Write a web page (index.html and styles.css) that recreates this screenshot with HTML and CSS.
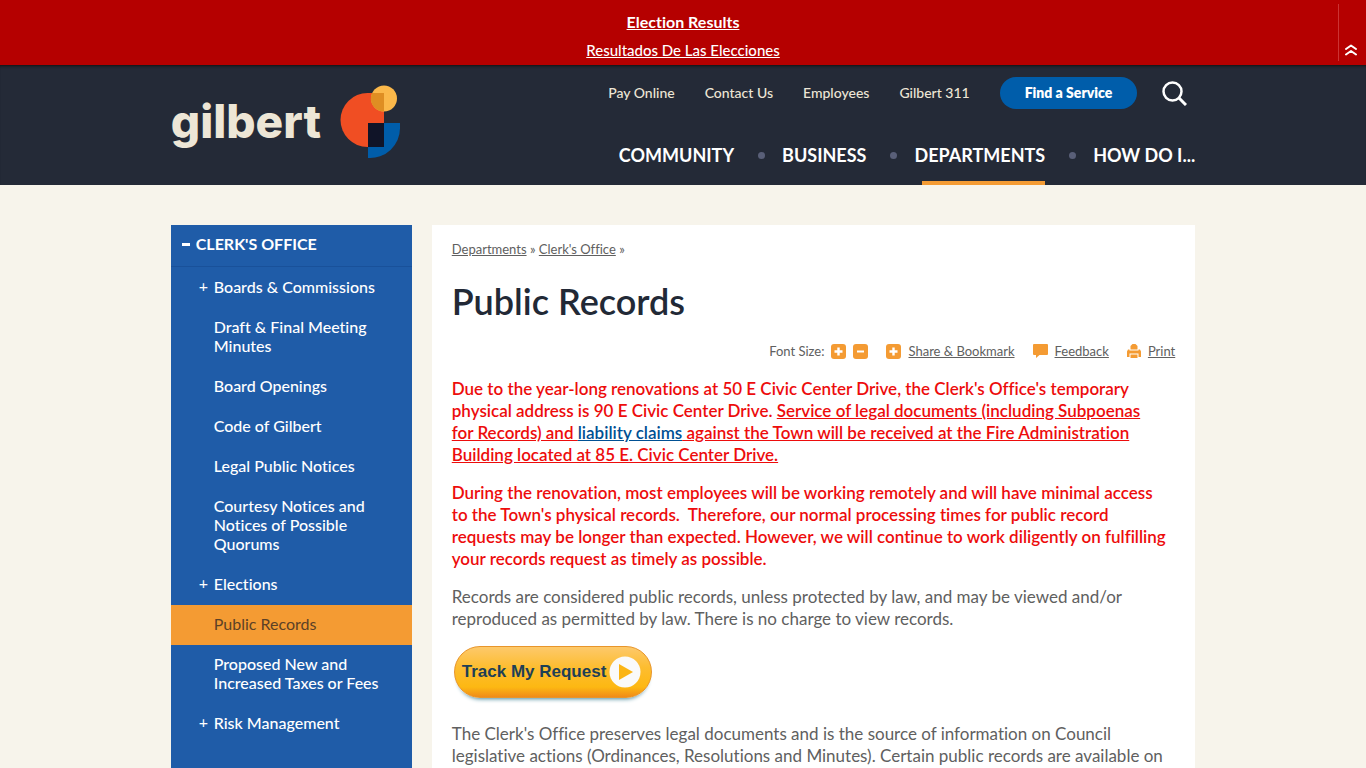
FILE: index.html
```html
<!DOCTYPE html>
<html lang="en">
<head>
<meta charset="utf-8">
<meta name="viewport" content="width=device-width, initial-scale=1">
<title>Public Records | Gilbert, Arizona</title>
<link rel="stylesheet" href="styles.css">
</head>
<body>
<section class="alert" aria-label="Announcements">
  <div class="alert-links">
    <a class="alert-primary" href="#">Election Results</a>
    <a href="#">Resultados De Las Elecciones</a>
  </div>
  <div class="alert-side">
    <button class="alert-toggle" type="button" aria-label="Collapse announcements">
      <svg width="12" height="12" viewBox="0 0 12 12" fill="none" stroke="#fff" stroke-width="2" stroke-linecap="round" stroke-linejoin="round"><path d="M1 5 6 1.500l5 3.500M1 10.500 6 7l5 3.500"/></svg>
    </button>
  </div>
</section>

<header class="site-header">
  <div class="container header-inner">
    <a class="logo" href="#" aria-label="Gilbert home">
      <span class="logo-text">gilbert</span>
      <svg class="logo-mark" width="60" height="74" viewBox="0 0 60 74">
        <path d="M44 8v54H27.500a27 27 0 0 1 0-54z" fill="#f04e23"/>
        <circle cx="44" cy="13.500" r="13" fill="#fbb84a"/>
        <path d="M44 8v18.500A13 13 0 0 1 32 8z" fill="#df8e23"/>
        <path d="M28 38h32v5a30 30 0 0 1-32 30z" fill="#005daa"/>
        <path d="M28 38h16v24H28z" fill="#101428"/>
      </svg>
    </a>
    <div class="header-nav">
      <nav class="top-nav" aria-label="Quick links">
        <a href="#">Pay Online</a>
        <a href="#">Contact Us</a>
        <a href="#">Employees</a>
        <a href="#">Gilbert 311</a>
        <a class="service" href="#">Find a Service</a>
        <button class="search" type="button" aria-label="Search">
          <svg width="25" height="25" viewBox="0 0 25 25" fill="none" stroke="#fff" stroke-width="2.500"><circle cx="10.500" cy="10.500" r="9"/><path d="m17 17 7 7" stroke-width="3"/></svg>
        </button>
      </nav>
      <nav class="main-nav" aria-label="Main">
        <a href="#">Community</a>
        <a href="#">Business</a>
        <a class="current" href="#">Departments</a>
        <a href="#">How Do I...</a>
      </nav>
    </div>
  </div>
</header>

<div class="container page">
  <nav class="sidebar" aria-label="Clerk's Office">
    <a class="side-title" href="#"><span class="minus"></span>Clerk's Office</a>
    <ul>
      <li><a class="more" href="#">Boards &amp; Commissions</a></li>
      <li><a href="#">Draft &amp; Final Meeting Minutes</a></li>
      <li><a href="#">Board Openings</a></li>
      <li><a href="#">Code of Gilbert</a></li>
      <li><a href="#">Legal Public Notices</a></li>
      <li><a href="#">Courtesy Notices and Notices of Possible Quorums</a></li>
      <li><a class="more" href="#">Elections</a></li>
      <li><a class="active" href="#">Public Records</a></li>
      <li><a href="#">Proposed New and Increased Taxes or Fees</a></li>
      <li><a class="more" href="#">Risk Management</a></li>
    </ul>
  </nav>

  <main class="content">
    <div class="crumbs"><a href="#">Departments</a> » <a href="#">Clerk's Office</a> »</div>
    <h1>Public Records</h1>
    <div class="tools">
      <div class="font-size">
        <span>Font Size:</span>
        <button type="button" aria-label="Increase font size"><svg width="15" height="15" viewBox="0 0 15 15"><rect width="15" height="15" rx="3" fill="#f49b33"/><path d="M3.500 7.500h8M7.500 3.500v8" stroke="#fff" stroke-width="2.400"/></svg></button>
        <button type="button" aria-label="Decrease font size"><svg width="15" height="15" viewBox="0 0 15 15"><rect width="15" height="15" rx="3" fill="#f49b33"/><path d="M4 7.500h7" stroke="#fff" stroke-width="2"/></svg></button>
      </div>
      <a href="#"><svg width="15" height="15" viewBox="0 0 15 15"><rect width="15" height="15" rx="3" fill="#f49b33"/><path d="M3.500 7.500h8M7.500 3.500v8" stroke="#fff" stroke-width="2.400"/></svg><span>Share &amp; Bookmark</span></a>
      <a href="#"><svg width="15" height="15" viewBox="0 0 15 15"><path d="M1 0h13a1 1 0 0 1 1 1v9a1 1 0 0 1-1 1H6.500L3 14V11H1a1 1 0 0 1-1-1V1a1 1 0 0 1 1-1z" fill="#f49b33"/></svg><span>Feedback</span></a>
      <a href="#"><svg width="14" height="14" viewBox="0 0 14 14" fill="#f49b33"><path d="M3.500 5.500V2l2-2h3l2 2v3.500zM0 7.500 1 5.500h1.500v1h9v-1H13l1 2V13h-2.500V9.500h-9V13H0zM3.500 10.500h7V14h-7z"/></svg><span>Print</span></a>
    </div>
    <p class="notice">Due to the year-long renovations at 50 E Civic Center Drive, the Clerk's Office's temporary physical address is 90 E Civic Center Drive. <u>Service of legal documents (including Subpoenas for&nbsp;Records) and <a href="#">liability claims</a> against the Town will be received at the Fire Administration Building located at 85 E. Civic Center Drive.</u></p>
    <p class="notice">During the renovation, most employees will be working remotely and will have minimal access to&nbsp;the Town's physical records.&nbsp; Therefore, our normal processing times for public record requests may be longer than expected. However, we will continue to work diligently on fulfilling your records request as timely as possible.</p>
    <p>Records are considered public records, unless protected by law, and may be viewed and/or reproduced as permitted by law. There is no charge to view records.</p>
    <a class="track" href="#"><span>Track My Request</span><svg width="32" height="32" viewBox="0 0 32 32"><circle cx="16" cy="16" r="15.500" fill="#fafafa"/><path d="m10 8 14 8-14 8z" fill="#fbb515"/></svg></a>
    <p>The Clerk's Office preserves legal documents and is the source of information on Council legislative actions (Ordinances, Resolutions and Minutes). Certain public records are available on the Town's website.</p>
  </main>
</div>
</body>
</html>
```
FILE: styles.css
```css
* { box-sizing: border-box; }
body {
  margin: 0;
  background: #f7f4eb;
  color: #606060;
  font: 400 16px/22px Lato, "Open Sans", sans-serif;
  font-variant-ligatures: none;
}
button { padding: 0; border: 0; background: none; cursor: pointer; }
svg { display: block; flex: none; }
.container { width: 75%; min-width: 1024px; margin: 0 auto; }

.alert {
  display: grid;
  grid-template-columns: 28px 1fr 28px;
  min-height: 65px;
  background: #b50000;
}
.alert-links {
  grid-column: 2;
  display: flex;
  flex-direction: column;
  align-items: center;
  gap: 6px;
  padding-top: 11px;
  font-size: 15px;
  font-weight: 500;
}
.alert-links a { color: #fff; }
.alert-links .alert-primary { font-size: 16px; font-weight: 700; }
.alert-side {
  display: flex;
  align-items: flex-end;
  margin: 4px 0;
  padding: 0 6px 5px;
  border-left: 1px solid #cc3333;
}

.site-header {
  background: #242a37;
  box-shadow: inset 0 3px 3px -2px #111;
}
.header-inner { display: flex; justify-content: space-between; min-height: 120px; }
.logo {
  display: flex;
  align-items: flex-start;
  gap: 19px;
  padding-top: 20px;
  color: #ede6d6;
  text-decoration: none;
}
.logo-text { font: 800 46px/72px Inter, sans-serif; }
.header-nav { display: flex; flex-direction: column; justify-content: space-between; }
.top-nav {
  display: flex;
  justify-content: flex-end;
  align-items: center;
  gap: 30px;
  padding: 12px 8px 0 0;
  font-size: 14px;
  font-weight: 500;
}
.top-nav a { color: #ede6d6; text-decoration: none; }
.top-nav .service {
  padding: 5px 25px;
  border-radius: 16px;
  background: #005daa;
  color: #fff;
  font-weight: 800;
}
.search { margin-left: -5px; }
.main-nav { display: flex; justify-content: flex-end; gap: 48px; }
.main-nav a {
  position: relative;
  padding: 8px 0 19px;
  color: #fff;
  font-size: 18px;
  line-height: 22px;
  font-weight: 700;
  text-decoration: none;
  text-transform: uppercase;
}
.main-nav a + a::before {
  content: "";
  position: absolute;
  top: 16px;
  left: -24px;
  width: 7px;
  height: 7px;
  border-radius: 50%;
  background: #595f78;
}
.main-nav .current::after {
  content: "";
  position: absolute;
  right: 0;
  bottom: 0;
  left: 8px;
  height: 4px;
  background: #f49b33;
}

.page { display: flex; align-items: stretch; gap: 20px; padding-top: 40px; }
.sidebar { flex: 0 0 241px; background: #1f5ca8; font-weight: 500; }
.sidebar a { color: #fff; text-decoration: none; }
.side-title {
  display: flex;
  align-items: center;
  gap: 6px;
  padding: 8px 11px 11px;
  border-bottom: 1px solid #19519a;
  font-weight: 700;
  text-transform: uppercase;
}
.minus { width: 8px; height: 3px; background: #fff; }
.sidebar ul { margin: 0; padding: 1px 0 0; list-style: none; }
.sidebar li a {
  position: relative;
  display: block;
  padding: 9px 26px 12px 43px;
  line-height: 19px;
}
.sidebar .more::before { content: "+"; position: absolute; left: 28px; top: 8px; font-weight: 400; }
.sidebar .active { background: #f49b33; color: #5c4126; font-weight: 400; }

.content { flex: 1; padding: 13px 20px; background: #fff; }
.content a { color: #606060; }
.crumbs { font-size: 13px; }
h1 { margin: 19px 0 17px; color: #222936; font-size: 36px; line-height: 44px; font-weight: 600; }
.tools {
  display: flex;
  justify-content: flex-end;
  align-items: center;
  gap: 18px;
  margin-bottom: 16px;
  font-size: 13px;
}
.font-size, .tools a { display: flex; align-items: center; gap: 7px; }
.tools a { text-decoration: none; }
.tools a span { text-decoration: underline; }
p { margin: 0 0 16px; font-size: 17px; }
.notice { color: #ed0c0c; font-weight: 600; }
.content .notice a { color: #005093; }
.content .track {
  display: flex;
  align-items: center;
  justify-content: space-between;
  width: 198px;
  height: 52px;
  margin: 0 0 25px 2px;
  padding: 0 10px 0 7px;
  border: 1px solid #e8952a;
  border-radius: 26px;
  background: linear-gradient(#fdc96b, #fdbd31 40%, #fdb813 80%, #f08b18);
  box-shadow: 0 5px 4px -4px #4c8a9b;
  color: #1e3f56;
  font: 700 17px/22px "Liberation Sans", Arial, sans-serif;
  text-decoration: none;
  white-space: nowrap;
}
```
